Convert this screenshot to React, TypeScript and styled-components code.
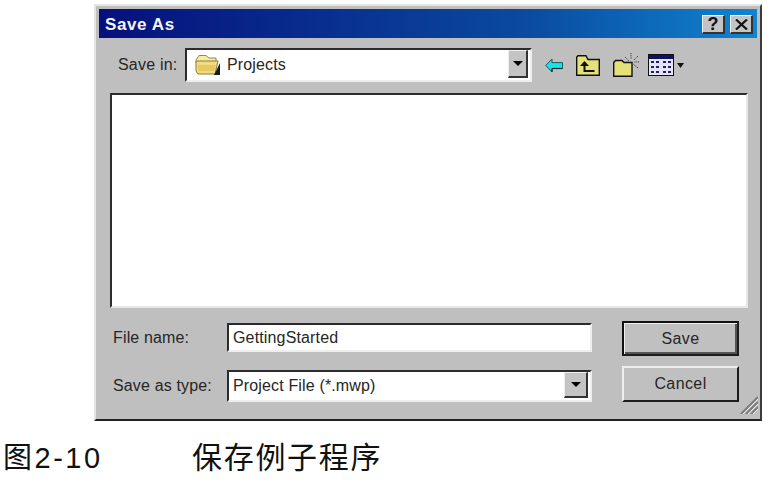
import React from "react";
import styled, { createGlobalStyle } from "styled-components";

const GlobalStyle = createGlobalStyle`
  html, body {
    margin: 0;
    background: #fff;
  }
  body {
    width: 777px;
    height: 500px;
    overflow: hidden;
  }
`;

const Page = styled.div`
  width: 777px;
  height: 500px;
  padding: 4px 0 0 94px;
  box-sizing: border-box;
`;

const Dialog = styled.div`
  width: 668px;
  height: 417px;
  box-sizing: border-box;
  background: #bfbfbf;
  border-top: 2px solid #e4e4e4;
  border-left: 2px solid #e4e4e4;
  border-right: 2px solid #3c3c3c;
  border-bottom: 2px solid #222;
  padding: 3px 3px 0 3px;
  display: flex;
  flex-direction: column;
  position: relative;
  font-family: "Liberation Sans", Arial, sans-serif;
  color: #262626;
`;

const TitleBar = styled.div`
  height: 29px;
  flex: none;
  box-sizing: border-box;
  display: flex;
  align-items: center;
  justify-content: space-between;
  padding: 2px 4px 0 6px;
  background: linear-gradient(90deg, #06107c 0%, #0a4aa0 65%, #1084d0 100%);
`;

const TitleText = styled.span`
  color: #f4f4f4;
  font-size: 17px;
  font-weight: bold;
  letter-spacing: 0.6px;
`;

const TitleButtons = styled.div`
  display: flex;
  gap: 5px;
`;

const TitleButton = styled.div`
  width: 23px;
  height: 19px;
  box-sizing: border-box;
  background: #c4c4c4;
  border-top: 1px solid #efefef;
  border-left: 1px solid #efefef;
  border-right: 2px solid #333;
  border-bottom: 2px solid #333;
  display: flex;
  align-items: center;
  justify-content: center;
  color: #111;
  font-size: 18px;
  font-weight: bold;
  line-height: 1;
`;

const Toolbar = styled.div`
  flex: none;
  display: flex;
  align-items: center;
  margin: 10px 0 11px;
  padding-left: 19px;
`;

const SaveInLabel = styled.span`
  width: 67px;
  font-size: 16px;
  letter-spacing: 0.2px;
`;

const Sunken = styled.div<{ $width: number; $height: number }>`
  width: ${(p) => p.$width}px;
  height: ${(p) => p.$height}px;
  flex: none;
  box-sizing: border-box;
  background: #fff;
  border-top: 2px solid #2c2c2c;
  border-left: 2px solid #2c2c2c;
  border-right: 2px solid #eee;
  border-bottom: 2px solid #eee;
  display: flex;
  align-items: center;
  font-size: 16px;
  letter-spacing: 0.15px;
  position: relative;
`;

const ComboText = styled.span`
  padding-left: 4px;
  white-space: nowrap;
`;

const FolderWrap = styled.span`
  display: flex;
  margin-left: 8px;
  margin-right: 6px;
`;

const DropButton = styled.div<{ $width: number }>`
  position: absolute;
  top: 0;
  right: 2px;
  bottom: 2px;
  width: ${(p) => p.$width}px;
  box-sizing: border-box;
  background: #c4c4c4;
  border-top: 1px solid #eee;
  border-left: 1px solid #eee;
  border-right: 2px solid #333;
  border-bottom: 2px solid #333;
  display: flex;
  align-items: center;
  justify-content: center;

  &::after {
    content: "";
    border-left: 5px solid transparent;
    border-right: 5px solid transparent;
    border-top: 5px solid #000;
  }
`;

const ToolIcons = styled.div`
  display: flex;
  align-items: center;
  margin-left: 13px;
  gap: 13px;
`;

const ViewMenu = styled.span`
  display: flex;
  margin-left: -4px;
`;

const FileList = styled.div`
  height: 215px;
  flex: none;
  margin: 0 9px 0 11px;
  box-sizing: border-box;
  background: #fff;
  border-top: 2px solid #2c2c2c;
  border-left: 2px solid #2c2c2c;
  border-right: 2px solid #e8e8e8;
  border-bottom: 2px solid #e8e8e8;
`;

const Lower = styled.div`
  display: flex;
  padding: 13px 0 0 14px;
`;

const Fields = styled.div`
  display: flex;
  flex-direction: column;
  gap: 18px;
  padding-top: 2px;
`;

const Field = styled.div`
  display: flex;
  align-items: center;
  font-size: 16px;
`;

const FieldLabel = styled.span`
  width: 114px;
  letter-spacing: 0.15px;
`;

const Buttons = styled.div`
  display: flex;
  flex-direction: column;
  gap: 10px;
  margin-left: 30px;
`;

const PushButton = styled.div<{ $default?: boolean }>`
  width: 117px;
  height: ${(p) => (p.$default ? 35 : 36)}px;
  box-sizing: border-box;
  background: #c0c0c0;
  border-top: 2px solid ${(p) => (p.$default ? "#111" : "#eee")};
  border-left: 2px solid ${(p) => (p.$default ? "#111" : "#eee")};
  border-right: 2px solid #1c1c1c;
  border-bottom: 2px solid #1c1c1c;
  box-shadow: ${(p) => (p.$default ? "inset 1px 1px 0 #eee, inset -2px -2px 0 #555" : "none")};
  display: flex;
  align-items: center;
  justify-content: center;
  font-size: 16px;
  letter-spacing: 0.4px;
`;

const Grip = styled.svg`
  position: absolute;
  right: 2px;
  bottom: 5px;
`;

const Caption = styled.div`
  display: flex;
  margin: 20px 0 0 -94px;
  align-items: baseline;
  color: #111;
  font-family: "Liberation Sans", "Noto Sans CJK SC", sans-serif;
  font-size: 29px;
  line-height: 34px;
`;

const CaptionNumber = styled.span`
  width: 192px;
  padding-left: 3px;
  box-sizing: border-box;
  letter-spacing: 2.5px;
`;

const CaptionText = styled.span`
  font-size: 30px;
  letter-spacing: 1.7px;
`;

const FolderIcon = () => (
  <svg width="26" height="22" viewBox="0 0 26 22">
    <path d="M1 6 L4 1.5 H11 L14 4 H21 V9 H1 Z" fill="#f8eca0" stroke="#8a8a60" />
    <path d="M1 7 H23 L20 20 H3 L1 17 Z" fill="#f2dc7c" stroke="#8a7a40" />
    <path d="M3 11 H21 L19 17 H3 Z" fill="#e8c860" />
    <path d="M19 21 L25 9 V21 Z" fill="#1a1a1a" />
  </svg>
);

const BackIcon = () => (
  <svg width="18" height="15" viewBox="0 0 18 15">
    <path d="M0.7 7.5 L7 1 V4.6 H17.5 V10.4 H7 V14 Z" fill="#12e6e6" stroke="#1a5a5a" />
    <path d="M7 14 V10.6 H17.5" fill="none" stroke="#123" />
  </svg>
);

const UpIcon = () => (
  <svg width="24" height="21" viewBox="0 0 24 21">
    <path d="M0.7 20.3 V2 L2 0.7 H10 L12 4.5 H23.3 V20.3 Z" fill="#e4e07a" stroke="#111" strokeWidth="1.4" />
    <path d="M4 11 H13 L8.5 6 Z" fill="#111" />
    <path d="M8.5 11 V16 H18.5" fill="none" stroke="#111" strokeWidth="2" />
  </svg>
);

const NewFolderIcon = () => (
  <svg width="26" height="24" viewBox="0 0 26 24">
    <path d="M0.7 23.3 V9.5 L2.5 7.5 H9 L11 9.5 H19 V23.3 Z" fill="#e4e07a" stroke="#111" strokeWidth="1.4" />
    <path
      d="M18 0 V6 M12 4 L16 8 M25 3 L21 7 M26 9 H21 M25 15 L20 11"
      stroke="#333"
      strokeDasharray="1.2 1"
    />
  </svg>
);

const ViewIcon = () => (
  <svg width="36" height="22" viewBox="0 0 36 22">
    <rect x="0.5" y="0.5" width="25" height="21" fill="#e4e4f4" stroke="#111" />
    <rect x="1" y="1" width="24" height="4" fill="#101060" />
    {[7, 12, 17].flatMap((y) =>
      [3, 8, 15, 20].map((x) => <rect key={`${x}-${y}`} x={x} y={y} width="3" height="2" fill="#20206a" />)
    )}
    <path d="M29 9 H36 L32.5 14 Z" fill="#111" />
  </svg>
);

const App = () => {
  return (
    <>
      <GlobalStyle />
      <Page>
        <Dialog>
          <TitleBar>
            <TitleText>Save As</TitleText>
            <TitleButtons>
              <TitleButton>?</TitleButton>
              <TitleButton>
                <svg width="13" height="11" viewBox="0 0 13 11">
                  <path d="M1 0.5 L12 10.5 M12 0.5 L1 10.5" stroke="#111" strokeWidth="2.2" />
                </svg>
              </TitleButton>
            </TitleButtons>
          </TitleBar>
          <Toolbar>
            <SaveInLabel>Save in:</SaveInLabel>
            <Sunken $width={347} $height={34}>
              <FolderWrap>
                <FolderIcon />
              </FolderWrap>
              Projects
              <DropButton $width={20} />
            </Sunken>
            <ToolIcons>
              <BackIcon />
              <UpIcon />
              <NewFolderIcon />
              <ViewMenu>
                <ViewIcon />
              </ViewMenu>
            </ToolIcons>
          </Toolbar>
          <FileList />
          <Lower>
            <Fields>
              <Field>
                <FieldLabel>File name:</FieldLabel>
                <Sunken $width={365} $height={29}>
                  <ComboText>GettingStarted</ComboText>
                </Sunken>
              </Field>
              <Field>
                <FieldLabel>Save as type:</FieldLabel>
                <Sunken $width={365} $height={32}>
                  <ComboText>Project File (*.mwp)</ComboText>
                  <DropButton $width={24} />
                </Sunken>
              </Field>
            </Fields>
            <Buttons>
              <PushButton $default>Save</PushButton>
              <PushButton>Cancel</PushButton>
            </Buttons>
          </Lower>
          <Grip width="18" height="18" viewBox="0 0 18 18">
            <path d="M18 1 L1 18 M18 6 L6 18 M18 11 L11 18" stroke="#7c7c7c" strokeWidth="2" />
            <path d="M18 3 L3 18 M18 8 L8 18 M18 13 L13 18" stroke="#ededed" strokeWidth="1" />
          </Grip>
        </Dialog>
        <Caption>
          <CaptionNumber>图2-10</CaptionNumber>
          <CaptionText>保存例子程序</CaptionText>
        </Caption>
      </Page>
    </>
  );
};

export default App;
